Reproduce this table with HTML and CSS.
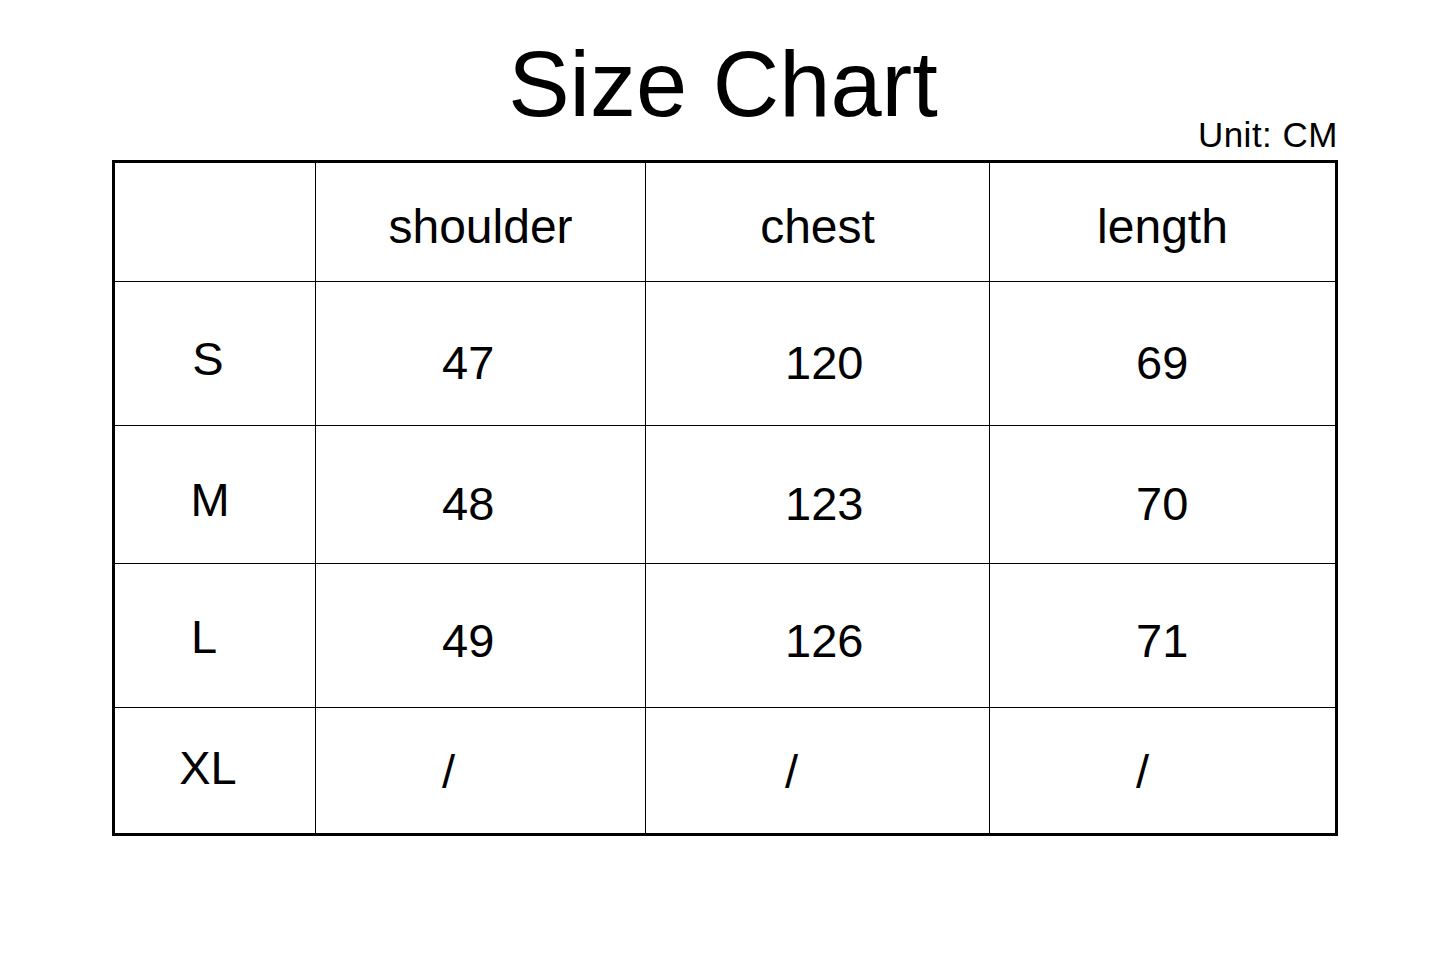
FILE: index.html
```html
<!DOCTYPE html>
<html lang="en">
<head>
<meta charset="utf-8">
<title>Size Chart</title>
<link rel="stylesheet" href="styles.css">
</head>
<body>
<main class="sheet">
  <h1 class="title">Size Chart</h1>
  <div class="wrap">
    <div class="unit">Unit: CM</div>
    <div class="chart">
      <div class="cell head lab"></div>
      <div class="cell head">shoulder</div>
      <div class="cell head">chest</div>
      <div class="cell head last-col">length</div>

      <div class="cell lab r-s">S</div>
      <div class="cell num c1 r-s-n">47</div>
      <div class="cell num c2 r-s-n">120</div>
      <div class="cell num c3 r-s-n last-col">69</div>

      <div class="cell lab r-m">M</div>
      <div class="cell num c1 r-m-n">48</div>
      <div class="cell num c2 r-m-n">123</div>
      <div class="cell num c3 r-m-n last-col">70</div>

      <div class="cell lab r-l">L</div>
      <div class="cell num c1 r-l-n">49</div>
      <div class="cell num c2 r-l-n">126</div>
      <div class="cell num c3 r-l-n last-col">71</div>

      <div class="cell lab r-xl last-row">XL</div>
      <div class="cell num c1 r-xl-n last-row">/</div>
      <div class="cell num c2 r-xl-n last-row">/</div>
      <div class="cell num c3 r-xl-n last-row last-col">/</div>
    </div>
  </div>
</main>
</body>
</html>
```
FILE: styles.css
```css
html, body {
  margin: 0;
  padding: 0;
  background: #fff;
}
body {
  font-family: "Liberation Sans", Arial, sans-serif;
  color: #000;
}
.sheet {
  padding-top: 38px;
}
.title {
  margin: 0;
  font-size: 92px;
  line-height: 92px;
  font-weight: normal;
  text-align: center;
  padding-left: 6px;
}
.wrap {
  margin-left: 112px;
  width: 1226px;
}
.unit {
  margin-top: -13px;
  height: 35px;
  font-size: 35px;
  line-height: 35px;
  letter-spacing: 0.5px;
  text-align: right;
  margin-right: 0;
}
.chart {
  margin-top: 8px;
  border: 3px solid #000;
  display: grid;
  grid-template-columns: 201px 330px 344px 345px;
  grid-template-rows: 119px 144px 138px 144px 125px;
}
.cell {
  box-sizing: border-box;
  border-right: 1px solid #000;
  border-bottom: 1px solid #000;
  font-size: 47px;
  line-height: 47px;
  white-space: nowrap;
}
.last-col { border-right: none; }
.last-row { border-bottom: none; }

.head {
  text-align: center;
  padding-top: 40px;
  font-size: 48px;
}
.lab {
  text-align: center;
  padding-right: 14px;
}
.lab.r-m { padding-right: 10px; }
.lab.r-l { padding-right: 22px; }
.num { text-align: left; }
.c1 { padding-left: 126px; }
.c2 { padding-left: 139px; }
.c3 { padding-left: 146px; }

.r-s { padding-top: 53px; }
.r-s-n { padding-top: 57px; }
.r-m { padding-top: 50px; }
.r-m-n { padding-top: 54px; }
.r-l { padding-top: 49px; }
.r-l-n { padding-top: 53px; }
.r-xl { padding-top: 36px; }
.r-xl-n { padding-top: 40px; }
```
